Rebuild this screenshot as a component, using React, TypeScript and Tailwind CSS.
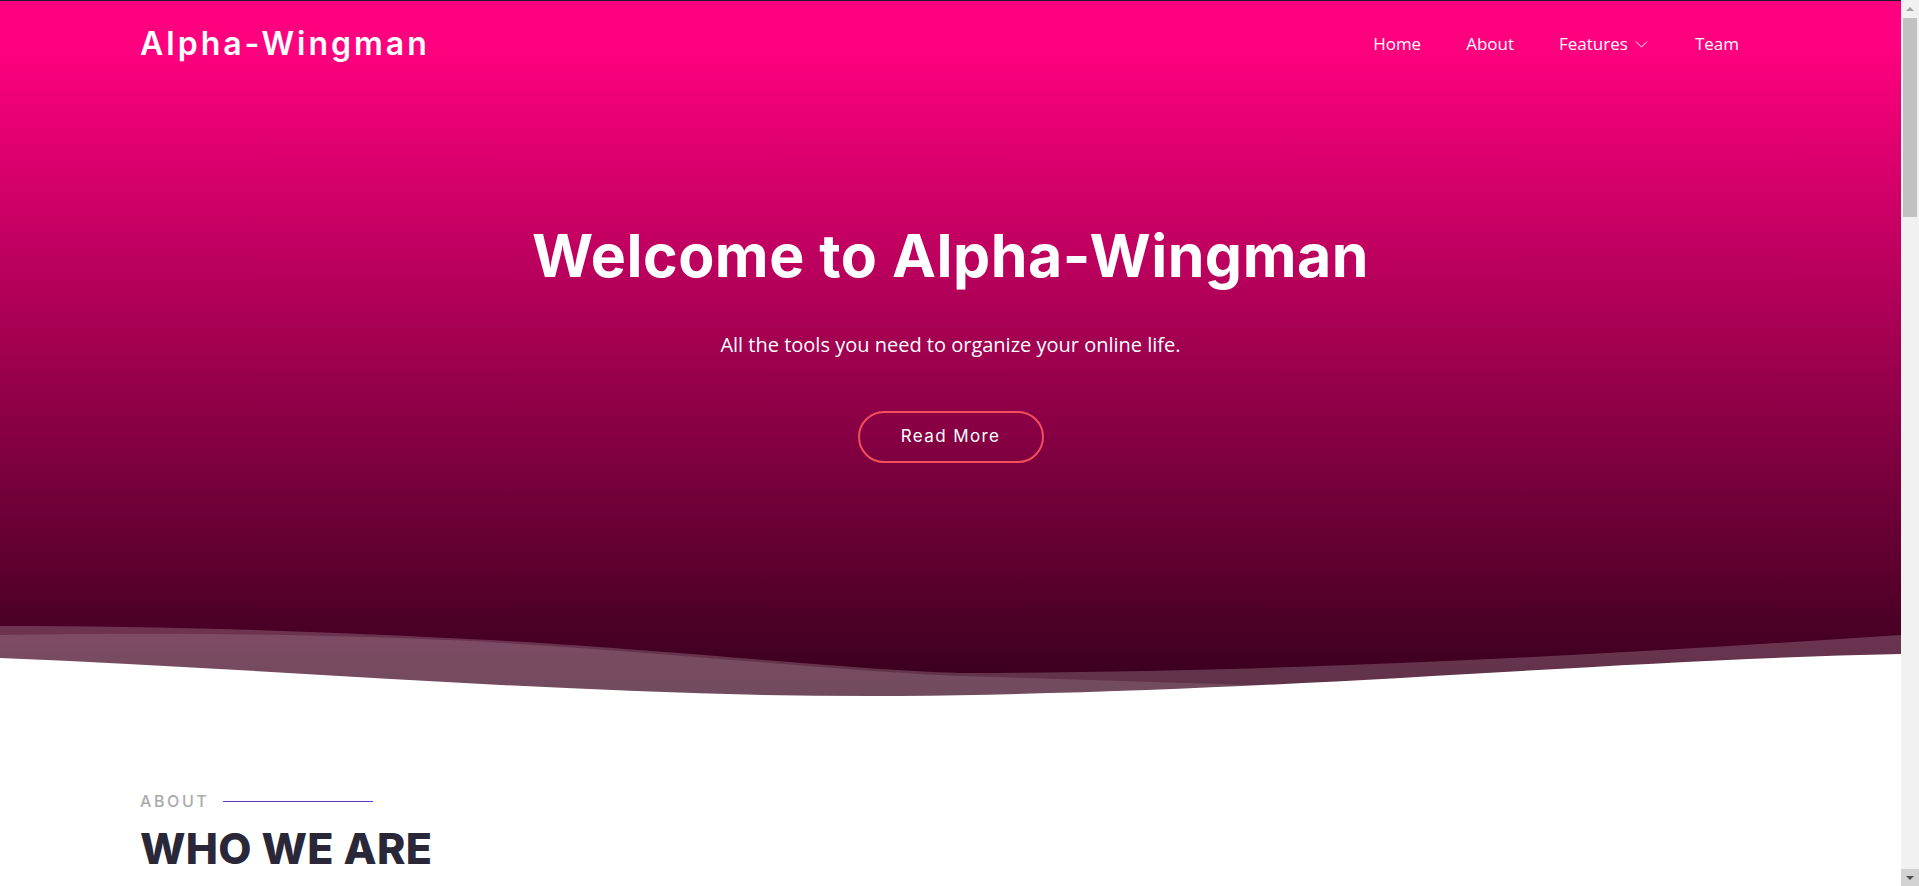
import React from "react";
import { ChevronDown } from "lucide-react";

const navLinks = ["Home", "About", "Features", "Team"];

// classic scrollbar, as the page is longer than the window
const ScrollTrack = () => (
  <aside className="flex h-full w-[18px] shrink-0 flex-col bg-[#f1f1f1]">
    <div className="flex h-[17px] items-center justify-center">
      <span className="h-0 w-0 border-x-[4px] border-b-[4px] border-x-transparent border-b-[#a3a3a3]" />
    </div>
    <div className="mx-[2px] mt-[1px] h-[199px] bg-[#c1c1c1]" />
    <div className="flex-1" />
    <div className="flex h-[17px] items-center justify-center bg-[#d2d2d2]">
      <span className="h-0 w-0 border-x-[4px] border-t-[4px] border-x-transparent border-t-[#505050]" />
    </div>
  </aside>
);

const App = () => {
  return (
    <div className="flex h-screen overflow-hidden bg-white font-['Open_Sans',sans-serif]">
      <main className="min-w-0 flex-1">
        {/* Hero */}
        <section className="relative h-[700px] border-t border-[#1c1b2b] bg-[linear-gradient(180deg,#ff007f_45px,#000_865px)] text-white">
          <header className="flex h-[86px] items-center justify-between px-[140px]">
            <a className="font-['Inter',sans-serif] text-[32px] font-semibold tracking-[3px]">
              Alpha-Wingman
            </a>
            <nav className="mr-[22px] flex items-center gap-[45px] text-[17px]">
              {navLinks.map((link) => (
                <a key={link} className="flex items-center">
                  {link}
                  {link === "Features" && (
                    <ChevronDown size={21} strokeWidth={1.1} className="ml-[3px] mt-[1px] -mr-[2px]" />
                  )}
                </a>
              ))}
            </nav>
          </header>

          <div className="flex flex-col items-center text-center">
            <h1 className="mt-[133px] font-['Inter',sans-serif] text-[59px] font-bold leading-[71px] tracking-[0.5px]">
              Welcome to Alpha-Wingman
            </h1>
            <p className="mt-[39px] text-[20px] leading-[30px]">
              All the tools you need to organize your online life.
            </p>
            <a className="mt-[51px] flex h-[52px] w-[186px] items-center justify-center rounded-full border-2 border-[#f24f5c] font-['Inter',sans-serif] text-[17px] font-normal tracking-[1.4px]">
              Read More
            </a>
          </div>

          {/* waves */}
          <svg
            className="absolute bottom-0 left-0 h-[80px] w-full"
            viewBox="0 0 1902 80"
            preserveAspectRatio="none"
          >
            <path
              d="M0,6 C150,6 300,10 490,20 C700,32 850,50 960,53 C1300,52 1600,35 1902,15 L1902,80 L0,80 Z"
              fill="#fff"
              fillOpacity="0.2"
            />
            <path
              d="M0,15 C200,12 350,15 490,22 C700,35 850,52 960,56 C1300,66 1600,78 1902,80 L1902,80 L0,80 Z"
              fill="#fff"
              fillOpacity="0.12"
            />
            <path
              d="M0,38 C300,50 600,78 900,76 C1300,72 1600,40 1902,34 L1902,80 L0,80 Z"
              fill="#fff"
            />
          </svg>
        </section>

        {/* About */}
        <section className="px-[140px] pt-[89px] pb-24">
          <div className="flex items-center">
            <span className="font-['Inter',sans-serif] text-[16px] font-medium uppercase leading-[24px] tracking-[2.6px] text-[#aaaaaa]">
              About
            </span>
            <span className="ml-[14px] h-px w-[150px] bg-[#6634cc]" />
          </div>
          <h2 className="mt-[9px] font-['Inter',sans-serif] text-[43px] font-extrabold uppercase leading-[52px] tracking-[0.3px] text-[#2a2739]">
            Who we are
          </h2>
          <div className="mt-10 grid grid-cols-2 gap-12 text-[16px] leading-7 text-[#555]">
            <p>
              Alpha-Wingman brings your accounts, notes, passwords and schedules
              together in one place, so you can spend less time searching and
              more time doing.
            </p>
            <p>
              Built by a small team that cares about privacy and simplicity,
              every tool is designed to work on its own or together with the
              rest.
            </p>
          </div>
        </section>
      </main>
      <ScrollTrack />
    </div>
  );
};

export default App;
